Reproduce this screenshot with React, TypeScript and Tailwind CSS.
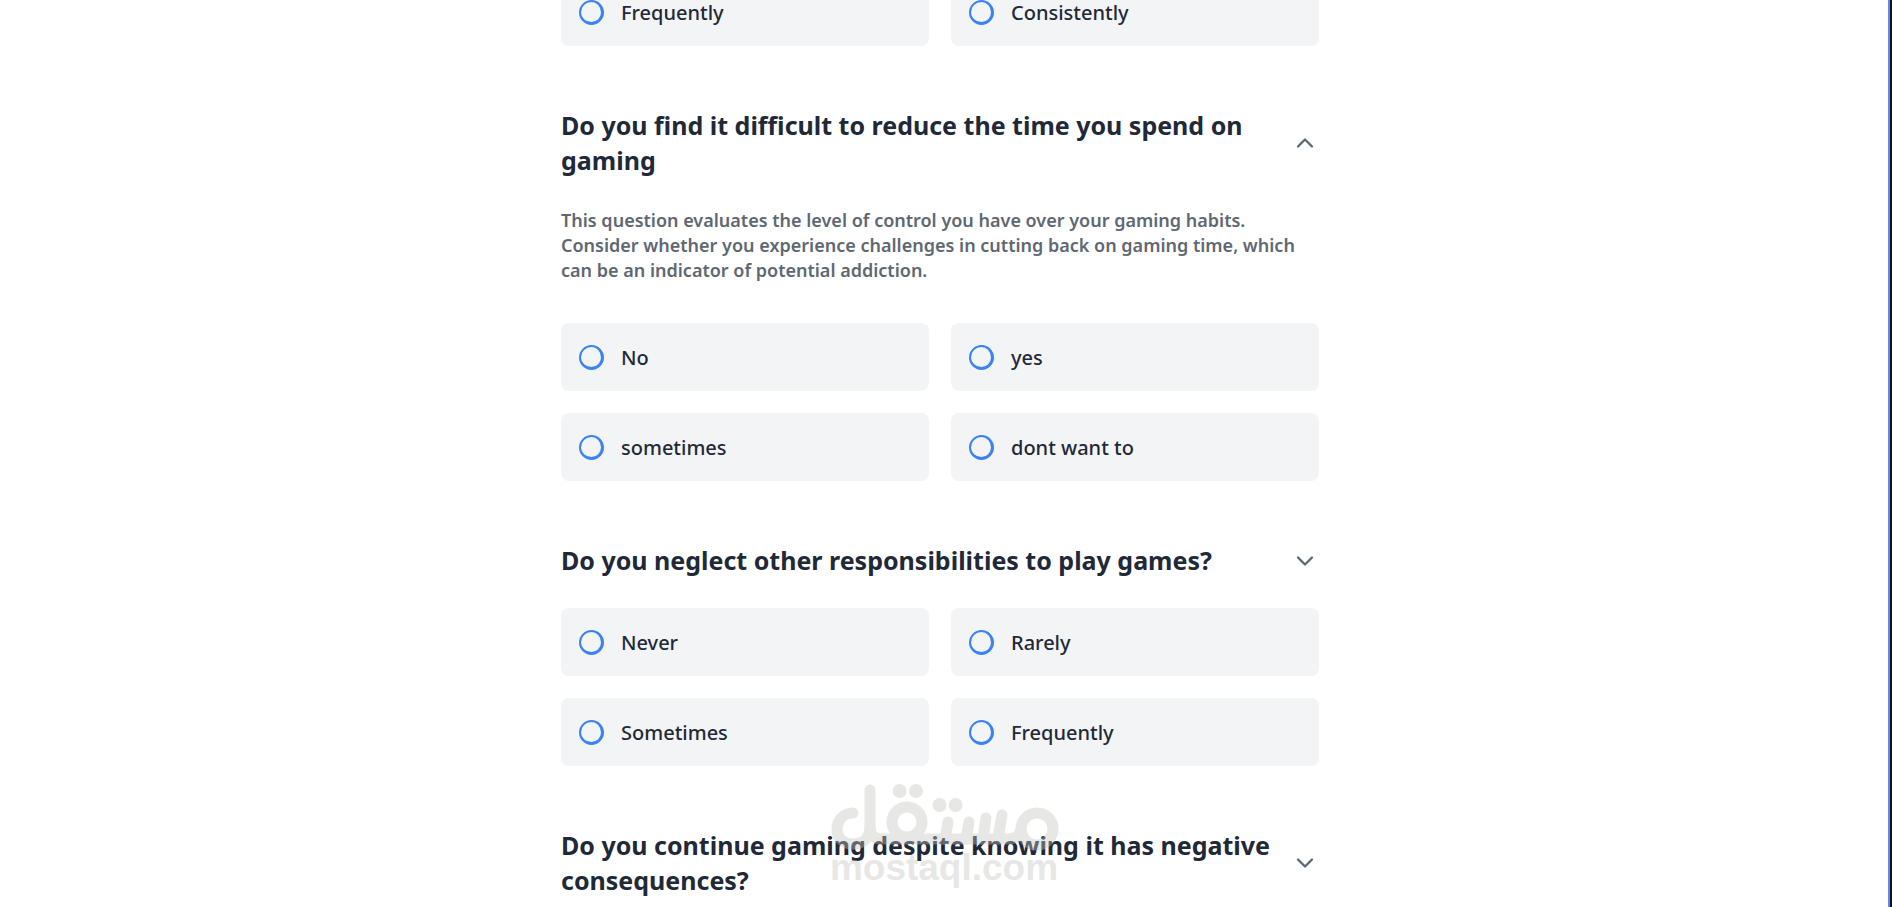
import React, { useId } from "react";
import { ChevronDown, ChevronUp } from "lucide-react";

interface Question {
  title: string;
  description?: string;
  expanded?: boolean;
  answers: string[];
}

const questions: Question[] = [
  {
    title: "Do you find it difficult to reduce the time you spend on gaming",
    description:
      "This question evaluates the level of control you have over your gaming habits. Consider whether you experience challenges in cutting back on gaming time, which can be an indicator of potential addiction.",
    expanded: true,
    answers: ["No", "yes", "sometimes", "dont want to"],
  },
  {
    title: "Do you neglect other responsibilities to play games?",
    answers: ["Never", "Rarely", "Sometimes", "Frequently"],
  },
  {
    title: "Do you continue gaming despite knowing it has negative consequences?",
    answers: [],
  },
];

const AnswerGrid = ({ answers }: { answers: string[] }) => {
  const name = useId();

  return (
    <div className="grid grid-cols-2 gap-[22px]">
      {answers.map((answer) => (
        <label
          key={answer}
          className="flex h-[68px] cursor-pointer items-center gap-[17px] rounded-lg bg-[#f3f4f6] px-[18px] text-xl leading-[27px] font-medium text-[#1f2937]"
        >
          <input
            type="radio"
            name={name}
            className="size-[25px] shrink-0 appearance-none rounded-full border-2 border-r-3 border-b-3 border-[#3b82f6] checked:bg-[#3b82f6]"
          />
          {answer}
        </label>
      ))}
    </div>
  );
};

const QuestionBlock = ({ title, description, expanded, answers }: Question) => {
  const Chevron = expanded ? ChevronUp : ChevronDown;

  return (
    <section className="pt-[62px]">
      <h2 className="mb-[30px] text-[25px] leading-[35px] font-bold text-[#1f2937]">
        <button
          type="button"
          aria-expanded={!!expanded}
          className="flex w-full cursor-pointer items-center justify-between gap-4 text-left"
        >
          <span>{title}</span>
          <Chevron className="size-7 shrink-0 text-[#5f6872]" strokeWidth={2} />
        </button>
      </h2>
      {description && (
        <p className="mb-10 text-lg leading-[25px] font-semibold text-[#5f6872]">{description}</p>
      )}
      <AnswerGrid answers={answers} />
    </section>
  );
};

const Watermark = () => (
  <div className="pointer-events-none absolute top-[783px] left-1/2 flex w-[230px] -translate-x-1/2 flex-col items-center text-[#c5c5c2] opacity-40">
    <svg
      viewBox="0 0 230 68"
      className="h-[68px] w-[230px] overflow-visible"
      fill="none"
      stroke="currentColor"
      strokeWidth="11"
      strokeLinecap="round"
    >
      <path d="M24 30 C14 30 8 38 8 46 C8 56 15 61 24 61 C35 61 41 54 41 44 V7" />
      <path d="M41 44 C41 52 45 56 53 56 H180 C187 56 191 52 192 46" />
      <circle cx="78" cy="39" r="15" />
      <path d="M119 39 L116 56 M140 39 L137 56 M157 35 L154 56 M173 32 L169 56" />
      <circle cx="208" cy="46" r="16" />
      <g fill="currentColor" stroke="none">
        <circle cx="70.6" cy="8" r="7" />
        <circle cx="87" cy="8" r="7" />
        <circle cx="110.6" cy="22" r="7" />
        <circle cx="126.6" cy="22" r="7" />
      </g>
    </svg>
    <span className="font-['Liberation_Sans',sans-serif] text-[37px] leading-[34px] font-bold">mostaql.com</span>
  </div>
);

const App = () => {
  return (
    <div className="flex h-screen overflow-hidden bg-white font-['Noto_Sans',sans-serif]">
      <main className="relative flex-1 pr-2">
        <div className="mx-auto w-full max-w-[758px]">
          {/* scrolled so that the last row of the previous question is cut by the top edge */}
          <div className="-mt-[22px]">
            <AnswerGrid answers={["Frequently", "Consistently"]} />
          </div>
          {questions.map((question) => (
            <QuestionBlock key={question.title} {...question} />
          ))}
        </div>
        <Watermark />
      </main>
      <div className="w-1 shrink-0 border-l-2 border-[#6488ea] bg-[#020f1c]" />
    </div>
  );
};

export default App;
